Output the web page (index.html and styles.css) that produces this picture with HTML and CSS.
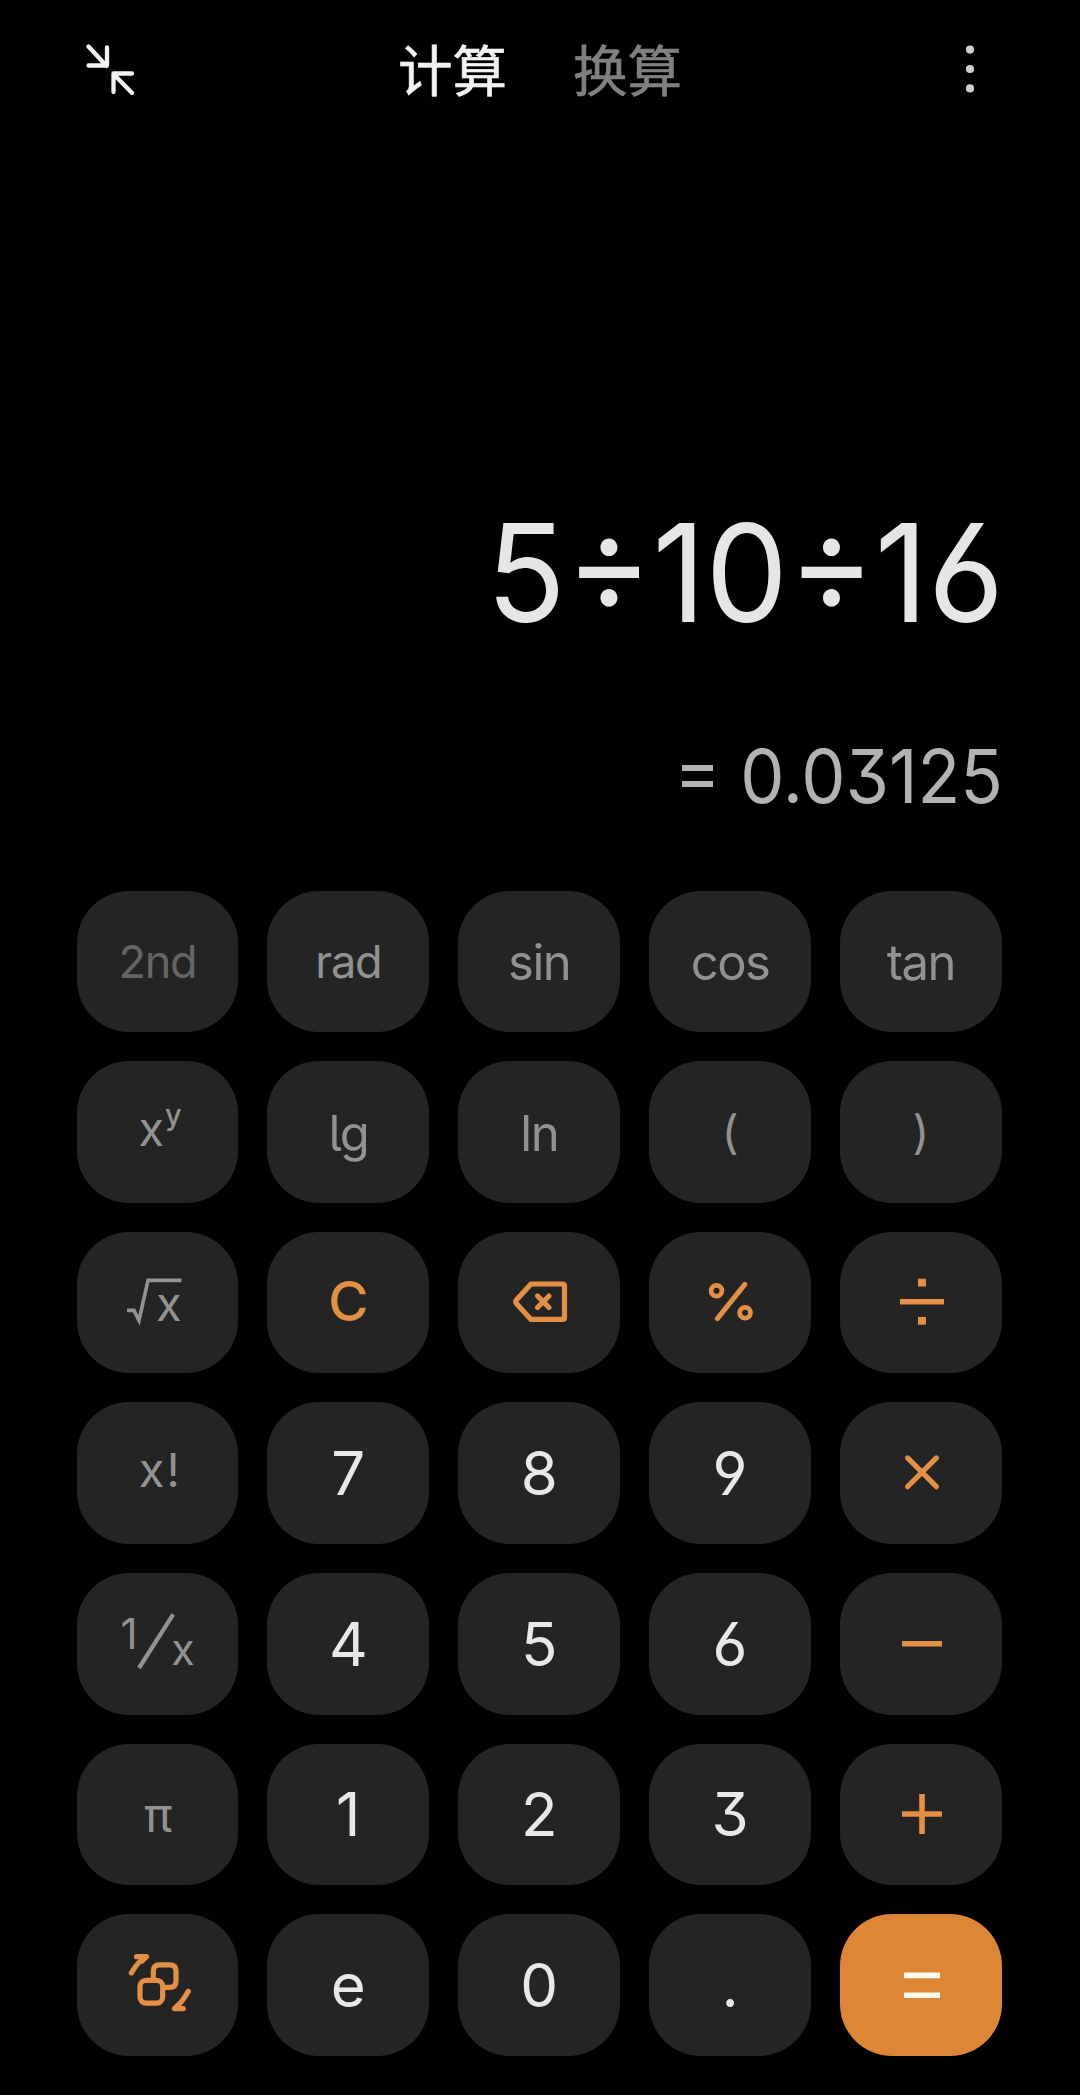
FILE: index.html
```html
<!DOCTYPE html>
<html lang="zh-CN">
<head>
    <meta charset="UTF-8">
    <title>计算</title>
    <link rel="stylesheet" href="styles.css">
</head>
<body>
    <header class="topbar">
        <svg class="shrink" viewBox="0 0 52 52">
            <path d="M4.500 3.500 22.500 23M4.500 22.500H23V4.500M48 30.500H29.500V49M30 31.500 48 50"/>
        </svg>
        <nav class="tabs">
            <span class="tab active">计算</span>
            <span class="tab">换算</span>
        </nav>
        <svg class="more" viewBox="0 0 10 48">
            <circle cx="5" cy="4.600" r="4.100"/>
            <circle cx="5" cy="24" r="4.100"/>
            <circle cx="5" cy="43.400" r="4.100"/>
        </svg>
    </header>

    <section class="display">
        <div class="expression">5÷10÷16</div>
        <div class="result">= 0.03125</div>
    </section>

    <main class="keypad">
        <button class="key fn small dim">2nd</button>
        <button class="key fn small">rad</button>
        <button class="key fn">sin</button>
        <button class="key fn">cos</button>
        <button class="key fn">tan</button>

        <button class="key fn">
            <svg viewBox="0 0 162 142">
                <text x="62.500" y="85" font-size="47">x</text>
                <text class="sup" x="89" y="64" font-size="29">y</text>
            </svg>
        </button>
        <button class="key fn tail">lg</button>
        <button class="key fn">ln</button>
        <button class="key fn paren">(</button>
        <button class="key fn paren">)</button>

        <button class="key fn">
            <svg viewBox="0 0 162 142">
                <path class="thin" d="M51 78.400H57.900L63 88.400 72 48.400H105.500"/>
                <text x="80" y="88.700" font-size="47">x</text>
            </svg>
        </button>
        <button class="key op clear">C</button>
        <button class="key op" aria-label="退格">
            <svg viewBox="0 0 162 142">
                <path class="round" d="M73 52H104.500Q106.500 52 106.500 54V85.400Q106.500 87.400 104.500 87.400H73L58.400 71.500Q57 69.700 58.400 67.900Z"/>
                <path class="round" d="M79.500 64 91 75.500M91 64 79.500 75.500"/>
            </svg>
        </button>
        <button class="key op" aria-label="%">
            <svg viewBox="0 0 162 142">
                <circle cx="67.500" cy="58.700" r="5.400"/>
                <circle cx="96.100" cy="80.700" r="5.400"/>
                <path class="round" d="M68.500 86.500 95.700 52.500"/>
            </svg>
        </button>
        <button class="key op" aria-label="÷">
            <svg viewBox="0 0 162 142">
                <path d="M60 69.700H104"/>
                <path class="dots" d="M78 46.700h8v7.800h-8zM78 85h8v7.800h-8z"/>
            </svg>
        </button>

        <button class="key fn">
            <svg viewBox="0 0 162 142">
                <text x="62.700" y="84.800" font-size="47">x</text>
                <text x="90.500" y="84.800" font-size="46">!</text>
            </svg>
        </button>
        <button class="key num">7</button>
        <button class="key num">8</button>
        <button class="key num">9</button>
        <button class="key op" aria-label="×">
            <svg viewBox="0 0 162 142">
                <path class="round" d="M67.600 55.900 96.400 84.700M96.400 55.900 67.600 84.700"/>
            </svg>
        </button>

        <button class="key fn">
            <svg viewBox="0 0 162 142">
                <text x="44.500" y="75.800" font-size="42">1</text>
                <path class="slash" d="M63 95 97.200 41.400"/>
                <text x="95.300" y="92.200" font-size="43">x</text>
            </svg>
        </button>
        <button class="key num">4</button>
        <button class="key num">5</button>
        <button class="key num">6</button>
        <button class="key op" aria-label="−">
            <svg viewBox="0 0 162 142">
                <path d="M62 70.700H102"/>
            </svg>
        </button>

        <button class="key fn pi">π</button>
        <button class="key num">1</button>
        <button class="key num">2</button>
        <button class="key num">3</button>
        <button class="key op" aria-label="+">
            <svg viewBox="0 0 162 142">
                <path d="M62 71H102M82 51V91"/>
            </svg>
        </button>

        <button class="key op" aria-label="切换">
            <svg viewBox="0 0 162 142">
                <rect class="round" x="64" y="66.400" width="22.700" height="22.700" rx="6"/>
                <path class="round" d="M77.300 66V57Q77.300 50.800 83.600 50.800H93.600Q100 50.800 100 57V67Q100 73.400 93.600 73.400H87.600"/>
                <path class="round" d="M60.500 42.700H70.500Q62 47 55.300 59M70.500 42.700 66 47M112.300 77.200Q106 88.500 98.500 94.600H107.300M98.500 94.600 103 90"/>
            </svg>
        </button>
        <button class="key num">e</button>
        <button class="key num">0</button>
        <button class="key num">.</button>
        <button class="key op equals" aria-label="=">
            <svg viewBox="0 0 162 142">
                <path d="M64 61.400H100M64 81.200H100"/>
            </svg>
        </button>
    </main>
</body>
</html>
```

FILE: styles.css
```css
* {
    box-sizing: border-box;
}
body {
    margin: 0;
    width: 1080px;
    height: 2095px;
    overflow: hidden;
    background: #000;
    font-family: Inter, "Noto Sans CJK SC", sans-serif;
    font-feature-settings: "cv03", "cv04", "cv09";
}

/* top bar */
.topbar {
    display: grid;
    grid-template-columns: 398px 1fr 115px;
    align-items: center;
    height: 138px;
}
.shrink {
    width: 52px;
    height: 52px;
    margin-left: 84px;
    fill: none;
    stroke: #f2f2f2;
    stroke-width: 4.3;
    stroke-linecap: round;
    stroke-linejoin: round;
}
.tabs {
    display: flex;
    gap: 66px;
    padding-bottom: 3px;
    font-family: "Noto Sans CJK SC", sans-serif;
    font-size: 54.5px;
    line-height: 80px;
    color: #808080;
    -webkit-text-stroke: .6px currentColor;
}
.tab.active {
    color: #f2f2f2;
}
.more {
    width: 10px;
    height: 48px;
    fill: #d0d0d0;
}

/* expression and result */
.display {
    height: 752.5px;
    padding: 355px 76px 0 0;
    text-align: right;
    white-space: nowrap;
}
.expression {
    font-size: 136px;
    line-height: 160px;
    color: #e6e6e6;
    transform: scaleX(.962);
    transform-origin: right;
}
.result {
    margin-top: 73px;
    margin-right: 1px;
    font-size: 74px;
    line-height: 100px;
    color: #b2b2b2;
    transform: scaleX(.948);
    transform-origin: right;
}

/* keys */
.keypad {
    display: grid;
    grid-template-columns: repeat(5, 161.7px);
    grid-auto-rows: 141.4px;
    gap: 29.27px 29.2px;
    padding-left: 76.6px;
}
.key {
    display: flex;
    align-items: center;
    justify-content: center;
    padding: 0;
    border: 0;
    border-radius: 52px;
    background: #242424;
    font: inherit;
    font-feature-settings: inherit;
}
.key svg {
    width: 162px;
    height: 142px;
    flex: none;
    fill: none;
    stroke: currentColor;
    stroke-width: 5.6;
}
.key text {
    fill: currentColor;
    stroke: none;
}
.key .sup {
    font-weight: 500;
}
.fn {
    padding-top: 3px;
    color: #929292;
    font-size: 49px;
    letter-spacing: -1.5px;
}
.fn:has(svg) {
    padding-top: 0;
}
.small {
    padding-top: 1px;
    font-size: 45px;
    letter-spacing: -1.2px;
}
.dim {
    color: #656565;
}
.key.tail {
    font-feature-settings: "cv05";
}
.paren {
    padding-top: 0;
    font-size: 46px;
    letter-spacing: 0;
}
.pi {
    padding-top: 0;
    font-size: 47px;
}
.num {
    color: #e8e8e8;
    font-size: 60px;
}
.op {
    color: #e38f44;
}
.clear {
    padding-bottom: 3px;
    font-size: 55px;
    font-weight: 500;
}
.key .thin {
    stroke-width: 3.6;
}
.key .slash {
    stroke-width: 4.2;
}
.key .round {
    stroke-width: 5.2;
    stroke-linecap: round;
    stroke-linejoin: round;
}
.key circle {
    stroke-width: 4.8;
}
.key .dots {
    fill: currentColor;
    stroke: none;
}
.equals {
    background: #dd8636;
    color: #fffaf0;
}
```
